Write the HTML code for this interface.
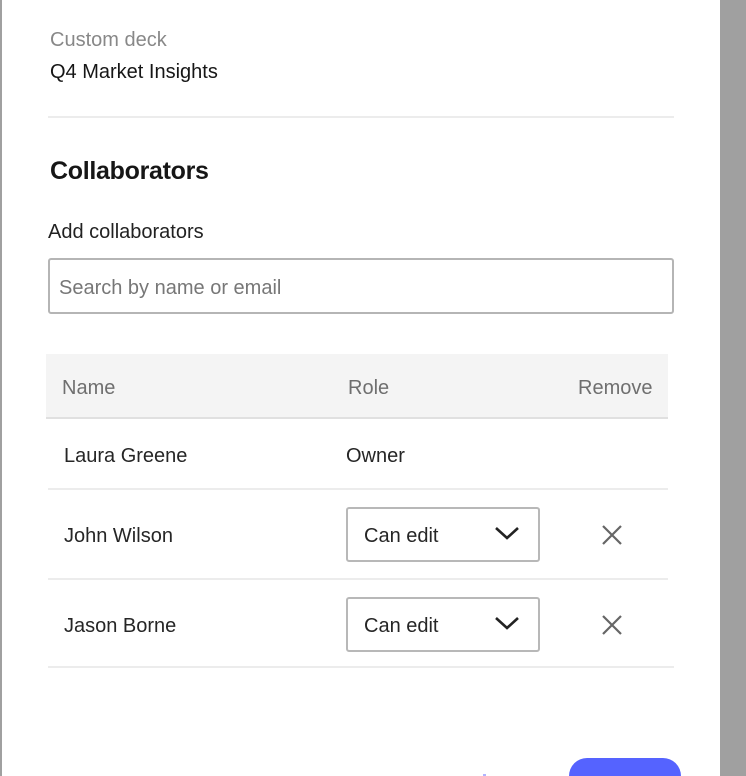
<!DOCTYPE html>
<html style="overflow:hidden;width:746px;height:776px"><head><style>
*{margin:0;padding:0;box-sizing:border-box}
body{width:746px;height:776px;overflow:hidden;background:#fff;font-family:"Liberation Sans",sans-serif;position:relative;color:#161616}
.a{position:absolute;white-space:nowrap}
.lb{position:absolute;left:0;top:0;width:2px;height:776px;background:#a0a0a0}
.rb{position:absolute;left:720px;top:0;width:26px;height:776px;background:#a0a0a0}
.hr{position:absolute;height:2px;background:#ececec}
.sel{position:absolute;left:346px;width:194px;height:55px;border:2px solid #b8b8b8;border-radius:3px}
.sel span{position:absolute;left:16px;top:16px;font-size:20px;color:#262626}
.sel svg{position:absolute;left:146px;top:14px}
.x{position:absolute;left:601px}
</style></head><body>
<div class="lb"></div><div class="rb"></div>
<div class="a" style="left:50px;top:29px;font-size:20px;color:#888">Custom deck</div>
<div class="a" style="left:50px;top:61px;font-size:20px">Q4 Market Insights</div>
<div class="hr" style="left:48px;top:116px;width:626px"></div>
<div class="a" style="left:50px;top:157px;font-size:25px;font-weight:bold;letter-spacing:-0.3px">Collaborators</div>
<div class="a" style="left:48px;top:221px;font-size:20px;color:#222">Add collaborators</div>
<div style="position:absolute;left:48px;top:258px;width:626px;height:56px;border:2px solid #b5b5b5;border-radius:3px"></div>
<div class="a" style="left:59px;top:277px;font-size:20px;color:#777">Search by name or email</div>
<div style="position:absolute;left:46px;top:354px;width:622px;height:64px;background:#f4f4f4"></div>
<div class="hr" style="left:46px;top:417px;width:622px;background:#e0e0e0"></div>
<div class="a" style="left:62px;top:377px;font-size:20px;color:#6f6f6f">Name</div>
<div class="a" style="left:348px;top:377px;font-size:20px;color:#6f6f6f">Role</div>
<div class="a" style="left:578px;top:377px;font-size:20px;color:#6f6f6f">Remove</div>
<div class="a" style="left:64px;top:445px;font-size:20px;color:#262626">Laura Greene</div>
<div class="a" style="left:346px;top:445px;font-size:20px;color:#262626">Owner</div>
<div class="hr" style="left:48px;top:488px;width:620px"></div>
<div class="a" style="left:64px;top:525px;font-size:20px;color:#262626">John Wilson</div>
<div class="sel" style="top:507px"><span>Can edit</span><svg width="26" height="18" viewBox="0 0 26 18"><path d="M2 5l11 10 11-10" fill="none" stroke="#222" stroke-width="2.6"/></svg></div>
<svg class="x" style="top:524px" width="22" height="22" viewBox="0 0 22 22"><path d="M2 2l18 18M20 2L2 20" stroke="#666" stroke-width="2.2"/></svg>
<div class="hr" style="left:48px;top:578px;width:620px"></div>
<div class="a" style="left:64px;top:615px;font-size:20px;color:#262626">Jason Borne</div>
<div class="sel" style="top:597px"><span>Can edit</span><svg width="26" height="18" viewBox="0 0 26 18"><path d="M2 5l11 10 11-10" fill="none" stroke="#222" stroke-width="2.6"/></svg></div>
<svg class="x" style="top:614px" width="22" height="22" viewBox="0 0 22 22"><path d="M2 2l18 18M20 2L2 20" stroke="#666" stroke-width="2.2"/></svg>
<div class="hr" style="left:48px;top:666px;width:626px"></div>
<div style="position:absolute;left:569px;top:758px;width:112px;height:18px;border-radius:25px 25px 0 0;background:#5563ff"></div>
<div style="position:absolute;left:483px;top:774px;width:3px;height:2px;background:#b0b4ff"></div>
</body></html>
